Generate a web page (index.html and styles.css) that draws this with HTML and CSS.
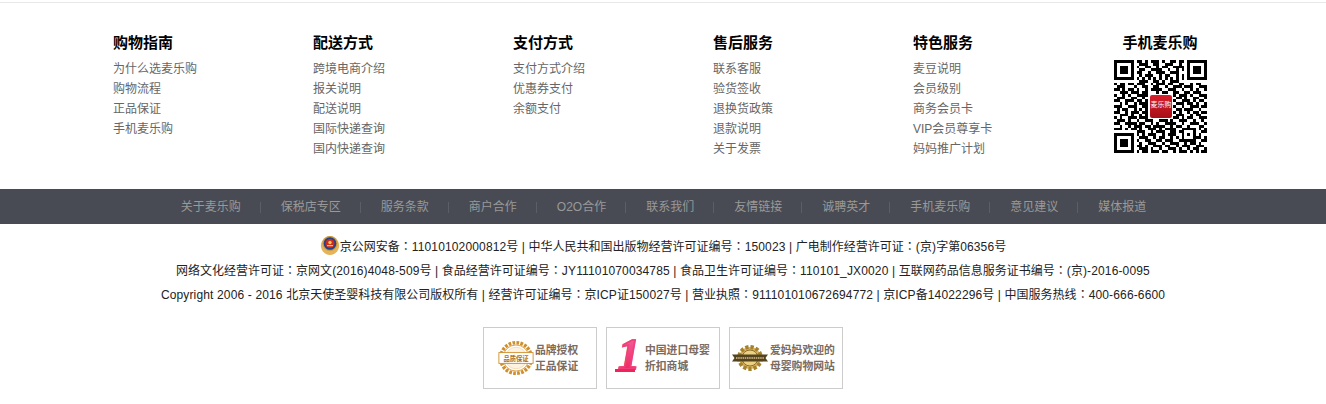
FILE: index.html
```html
<!DOCTYPE html>
<html lang="en">
<head>
    <meta charset="UTF-8">
    <meta name="viewport" content="width=device-width, initial-scale=1.0">
    <title>麦乐购</title>
    <link rel="stylesheet" href="styles.css">
</head>
<body>
    <div class="help-wrap">
        <div class="help">
            <div class="help-col">
                <h4>购物指南</h4>
                <a href="#">为什么选麦乐购</a>
                <a href="#">购物流程</a>
                <a href="#">正品保证</a>
                <a href="#">手机麦乐购</a>
            </div>
            <div class="help-col">
                <h4>配送方式</h4>
                <a href="#">跨境电商介绍</a>
                <a href="#">报关说明</a>
                <a href="#">配送说明</a>
                <a href="#">国际快递查询</a>
                <a href="#">国内快递查询</a>
            </div>
            <div class="help-col">
                <h4>支付方式</h4>
                <a href="#">支付方式介绍</a>
                <a href="#">优惠券支付</a>
                <a href="#">余额支付</a>
            </div>
            <div class="help-col">
                <h4>售后服务</h4>
                <a href="#">联系客服</a>
                <a href="#">验货签收</a>
                <a href="#">退换货政策</a>
                <a href="#">退款说明</a>
                <a href="#">关于发票</a>
            </div>
            <div class="help-col">
                <h4>特色服务</h4>
                <a href="#">麦豆说明</a>
                <a href="#">会员级别</a>
                <a href="#">商务会员卡</a>
                <a href="#">VIP会员尊享卡</a>
                <a href="#">妈妈推广计划</a>
            </div>
            <div class="help-qr">
                <h4>手机麦乐购</h4>
                <div class="qr">
                    <svg class="qr-code" viewBox="0 0 33 33" shape-rendering="crispEdges">
                        <path fill="none" stroke="#000" d="M0 .5h7M8 .5h2M11 .5h1M13 .5h3M17 .5h1M20 .5h2M23 .5h2M26 .5h7
                        M0 1.5h1M6 1.5h1M9 1.5h3M14 1.5h2M18 1.5h3M23 1.5h1M26 1.5h1M32 1.5h1
                        M0 2.5h1M2 2.5h3M6 2.5h1M8 2.5h1M11 2.5h2M15 2.5h1M17 2.5h2M21 2.5h4M26 2.5h1M28 2.5h3M32 2.5h1
                        M0 3.5h1M2 3.5h3M6 3.5h1M9 3.5h2M13 3.5h4M19 3.5h1M22 3.5h1M24 3.5h1M26 3.5h1M28 3.5h3M32 3.5h1
                        M0 4.5h1M2 4.5h3M6 4.5h1M8 4.5h2M12 4.5h1M15 4.5h3M20 4.5h3M26 4.5h1M28 4.5h3M32 4.5h1
                        M0 5.5h1M6 5.5h1M9 5.5h1M11 5.5h3M16 5.5h1M18 5.5h2M22 5.5h1M24 5.5h1M26 5.5h1M32 5.5h1
                        M0 6.5h7M8 6.5h1M10 6.5h1M12 6.5h1M14 6.5h1M16 6.5h1M18 6.5h1M20 6.5h1M22 6.5h1M24 6.5h1M26 6.5h7
                        M9 7.5h3M14 7.5h2M17 7.5h1M20 7.5h3
                        M0 8.5h1M2 8.5h2M5 8.5h2M8 8.5h3M13 8.5h1M15 8.5h3M19 8.5h2M23 8.5h2M27 8.5h1M29 8.5h2
                        M1 9.5h3M7 9.5h1M10 9.5h2M14 9.5h2M18 9.5h1M21 9.5h3M25 9.5h3M30 9.5h3
                        M0 10.5h2M3 10.5h1M5 10.5h2M8 10.5h1M11 10.5h1M13 10.5h4M19 10.5h3M24 10.5h1M27 10.5h1M29 10.5h1M32 10.5h1
                        M2 11.5h3M6 11.5h3M10 11.5h2M15 11.5h1M17 11.5h2M21 11.5h2M25 11.5h2M28 11.5h3
                        M0 12.5h1M3 12.5h1M5 12.5h1M8 12.5h4M21 12.5h1M23 12.5h3M27 12.5h1M30 12.5h3
                        M1 13.5h3M6 13.5h2M10 13.5h1M22 13.5h2M25 13.5h1M28 13.5h2M32 13.5h1
                        M0 14.5h2M4 14.5h3M8 14.5h2M11 14.5h1M21 14.5h1M24 14.5h3M28 14.5h1M30 14.5h2
                        M2 15.5h1M4 15.5h1M7 15.5h1M9 15.5h3M22 15.5h3M26 15.5h2M29 15.5h1M32 15.5h1
                        M0 16.5h3M5 16.5h3M10 16.5h2M21 16.5h1M24 16.5h1M27 16.5h3M31 16.5h2
                        M1 17.5h1M3 17.5h2M7 17.5h1M9 17.5h1M11 17.5h1M22 17.5h2M25 17.5h3M30 17.5h1
                        M0 18.5h2M4 18.5h1M6 18.5h3M10 18.5h2M21 18.5h1M23 18.5h1M26 18.5h1M28 18.5h2M31 18.5h2
                        M2 19.5h3M6 19.5h1M9 19.5h1M11 19.5h1M22 19.5h3M27 19.5h1M29 19.5h2
                        M0 20.5h1M2 20.5h1M5 20.5h3M9 20.5h3M21 20.5h2M24 20.5h1M26 20.5h2M30 20.5h3
                        M1 21.5h3M5 21.5h1M8 21.5h1M11 21.5h3M16 21.5h3M20 21.5h1M23 21.5h3M28 21.5h1M31 21.5h1
                        M0 22.5h2M4 22.5h4M9 22.5h2M13 22.5h1M15 22.5h1M18 22.5h4M24 22.5h1M27 22.5h3M32 22.5h1
                        M2 23.5h1M5 23.5h1M7 23.5h3M11 23.5h2M14 23.5h4M20 23.5h1M22 23.5h2M26 23.5h1M30 23.5h2
                        M0 24.5h3M4 24.5h1M6 24.5h2M9 24.5h1M12 24.5h3M16 24.5h1M18 24.5h4M24 24.5h5M30 24.5h1M32 24.5h1
                        M8 25.5h3M13 25.5h1M15 25.5h3M20 25.5h2M23 25.5h2M28 25.5h1M31 25.5h2
                        M0 26.5h7M8 26.5h1M10 26.5h1M12 26.5h3M17 26.5h1M19 26.5h3M24 26.5h1M26 26.5h1M28 26.5h1M30 26.5h1
                        M0 27.5h1M6 27.5h1M9 27.5h3M14 27.5h1M16 27.5h2M20 27.5h1M22 27.5h1M24 27.5h1M28 27.5h3M32 27.5h1
                        M0 28.5h1M2 28.5h3M6 28.5h1M8 28.5h1M11 28.5h2M15 28.5h2M18 28.5h3M23 28.5h6M31 28.5h2
                        M0 29.5h1M2 29.5h3M6 29.5h1M9 29.5h1M12 29.5h3M17 29.5h1M20 29.5h3M25 29.5h1M27 29.5h2M30 29.5h1
                        M0 30.5h1M2 30.5h3M6 30.5h1M8 30.5h2M11 30.5h1M14 30.5h3M18 30.5h2M22 30.5h1M24 30.5h3M29 30.5h3
                        M0 31.5h1M6 31.5h1M9 31.5h3M13 31.5h1M16 31.5h1M19 31.5h3M23 31.5h1M26 31.5h1M28 31.5h2M32 31.5h1
                        M0 32.5h7M8 32.5h1M10 32.5h2M13 32.5h3M17 32.5h2M21 32.5h1M23 32.5h3M27 32.5h1M29 32.5h1M31 32.5h2"/>
                    </svg>
                    <span class="qr-logo">麦乐购</span>
                </div>
            </div>
        </div>
    </div>

    <ul class="nav">
        <li><a href="#">关于麦乐购</a></li>
        <li><a href="#">保税店专区</a></li>
        <li><a href="#">服务条款</a></li>
        <li><a href="#">商户合作</a></li>
        <li><a href="#">O2O合作</a></li>
        <li><a href="#">联系我们</a></li>
        <li><a href="#">友情链接</a></li>
        <li><a href="#">诚聘英才</a></li>
        <li><a href="#">手机麦乐购</a></li>
        <li><a href="#">意见建议</a></li>
        <li><a href="#">媒体报道</a></li>
    </ul>

    <div class="legal">
        <p>
            <svg class="police" viewBox="0 0 20 20">
                <path fill="#e3b45c" d="M1 9c-1 5 3 11 9 11s10-6 9-11c-1-4-4-8-9-8s-8 4-9 8z"/>
                <circle cx="10" cy="8.500" r="7.500" fill="#c99a3c"/>
                <circle cx="10" cy="8.500" r="6.300" fill="#23408f"/>
                <circle cx="10" cy="8.500" r="4.500" fill="#cf2a1e"/>
                <circle cx="10" cy="7.500" r="1.700" fill="#f1c94e"/>
                <rect x="7" y="10" width="6" height="1.200" fill="#f1c94e"/>
            </svg>京公网安备<span class="colon">：</span><span class="num">11010102000812</span>号<span class="num"> | </span>中华人民共和国出版物经营许可证编号<span class="colon">：</span><span class="num">150023 | </span>广电制作经营许可证<span class="colon">：</span><span class="num">(</span>京<span class="num">)</span>字第<span class="num">06356</span>号
        </p>
        <p>网络文化经营许可证<span class="colon">：</span>京网文<span class="num">(2016)4048-509</span>号<span class="num"> | </span>食品经营许可证编号<span class="colon">：</span><span class="num">JY11101070034785 | </span>食品卫生许可证编号<span class="colon">：</span><span class="num">110101_JX0020 | </span>互联网药品信息服务证书编号<span class="colon">：</span><span class="num">(</span>京<span class="num">)-2016-0095</span></p>
        <p><span class="num">Copyright 2006 - 2016 </span>北京天使圣婴科技有限公司版权所有<span class="num"> | </span>经营许可证编号<span class="colon">：</span>京<span class="num">ICP</span>证<span class="num">150027</span>号<span class="num"> | </span>营业执照<span class="colon">：</span><span class="num">911101010672694772 | </span>京<span class="num">ICP</span>备<span class="num">14022296</span>号<span class="num"> | </span>中国服务热线<span class="colon">：</span><span class="num">400-666-6600</span></p>
    </div>

    <div class="badges">
        <a class="badge" href="#">
            <svg class="seal" viewBox="0 0 40 40">
                <circle cx="20" cy="20" r="17" fill="#fff" stroke="#cf8f2e" stroke-width="4" stroke-dasharray="3 1.450"/>
                <circle cx="20" cy="20" r="14.500" fill="#fff" stroke="#d89a3c" stroke-width="1"/>
                <circle cx="20" cy="20" r="12" fill="#fdf3e0" stroke="#eccb91" stroke-width=".6"/>
                <rect x="1" y="14" width="38" height="12" fill="#fff" stroke="#cf8f2e" stroke-width="1"/>
                <text class="seal-text" x="20" y="23" text-anchor="middle">品质保证</text>
            </svg>
            <span class="badge-text">品牌授权<br>正品保证</span>
        </a>
        <a class="badge" href="#">
            <span class="rank">1</span>
            <span class="badge-text">中国进口母婴<br>折扣商城</span>
        </a>
        <a class="badge" href="#">
            <svg class="gear" viewBox="0 0 36 30">
                <circle cx="18" cy="15" r="11" fill="#d9b45c" stroke="#a5812f" stroke-width="4" stroke-dasharray="3.200 2"/>
                <circle cx="18" cy="15" r="8" fill="#ecd084" stroke="#8c6d2c" stroke-width="1"/>
                <path fill="#54431f" d="M0 11.500h36l-2.500 3.500 2.500 3.500h-36l2.500-3.500z"/>
                <path fill="none" stroke="#d9c28a" stroke-width="1.600" stroke-dasharray="1.500 .7" d="M4 15h28"/>
            </svg>
            <span class="badge-text">爱妈妈欢迎的<br>母婴购物网站</span>
        </a>
    </div>
</body>
</html>
```

FILE: styles.css
```css
body {
    margin: 0;
    font-family: "Liberation Sans", "Noto Sans CJK SC", sans-serif;
    font-size: 12px;
    color: #222;
    background: #fff;
}

a {
    text-decoration: none;
    color: inherit;
}

.help-wrap {
    margin-top: 2px;
    border-top: 1px solid #e8e8e8;
}

.help {
    display: flex;
    width: 1100px;
    height: 156px;
    margin: 0 auto;
    padding-top: 30px;
}

.help h4 {
    margin: 0 0 6px;
    font-size: 15px;
    line-height: 20px;
    font-weight: bold;
    color: #000;
}

.help-col {
    width: 200px;
}

.help-col a {
    display: block;
    line-height: 20px;
    color: #666;
}

.help-qr {
    width: 94px;
    text-align: center;
}

.help-qr h4 {
    margin-bottom: 7px;
}

.qr {
    position: relative;
    width: 93px;
    height: 93px;
    margin-left: 1px;
}

.qr-code {
    display: block;
    width: 93px;
    height: 93px;
}

.qr-logo {
    position: absolute;
    left: 35px;
    top: 34px;
    width: 24px;
    height: 25px;
    border-radius: 3px;
    border: 1px solid #fff;
    box-sizing: border-box;
    background: linear-gradient(#d8202c, #a80f18);
    color: #fff;
    font-size: 7px;
    line-height: 19px;
    text-align: center;
    white-space: nowrap;
    overflow: hidden;
}

.nav {
    display: flex;
    justify-content: center;
    align-items: center;
    height: 35px;
    margin: 0;
    padding: 2px 0 0;
    box-sizing: border-box;
    list-style: none;
    background: #484b54;
}

.nav li {
    height: 11px;
    line-height: 11px;
    padding: 0 19px 0 20px;
    border-right: 1px solid #5a5e66;
    color: #999;
}

.nav li:last-child {
    border-right: none;
}

.legal {
    padding-top: 10px;
    text-align: center;
}

.legal p {
    margin: 0;
    line-height: 24px;
    height: 24px;
}

.num {
    letter-spacing: .145px;
}

.colon {
    font-family: "Noto Sans CJK TC", sans-serif;
}

.police {
    width: 20px;
    height: 20px;
    vertical-align: -4px;
}

.badges {
    display: flex;
    justify-content: center;
    gap: 9px;
    margin-top: 21px;
    padding-bottom: 15px;
}

.badge {
    display: flex;
    align-items: center;
    width: 114px;
    height: 62px;
    box-sizing: border-box;
    border: 1px solid #ccc;
}

.badge-text {
    font-size: 10.800px;
    font-weight: bold;
    line-height: 16px;
    color: #7a6a60;
    white-space: nowrap;
}

.seal {
    width: 36px;
    height: 36px;
    margin: 0 1px 0 14px;
}

.seal-text {
    font-size: 7px;
    font-weight: bold;
    fill: #a86f1c;
}

.rank {
    position: relative;
    width: 28px;
    margin: 0 2px 6px 8px;
    font-family: "Liberation Serif", serif;
    font-size: 44px;
    font-weight: bold;
    font-style: italic;
    line-height: 36px;
    text-align: center;
    background: linear-gradient(#f0609a, #f0245c);
    -webkit-background-clip: text;
    background-clip: text;
    color: transparent;
    -webkit-text-stroke: 1.500px #f0407c;
}

.rank::after {
    content: "";
    position: absolute;
    left: 0;
    bottom: 1px;
    width: 20px;
    height: 3px;
    background: #f0245c;
}

.gear {
    width: 36px;
    height: 30px;
    margin: 0 2px 0 2px;
}
```
